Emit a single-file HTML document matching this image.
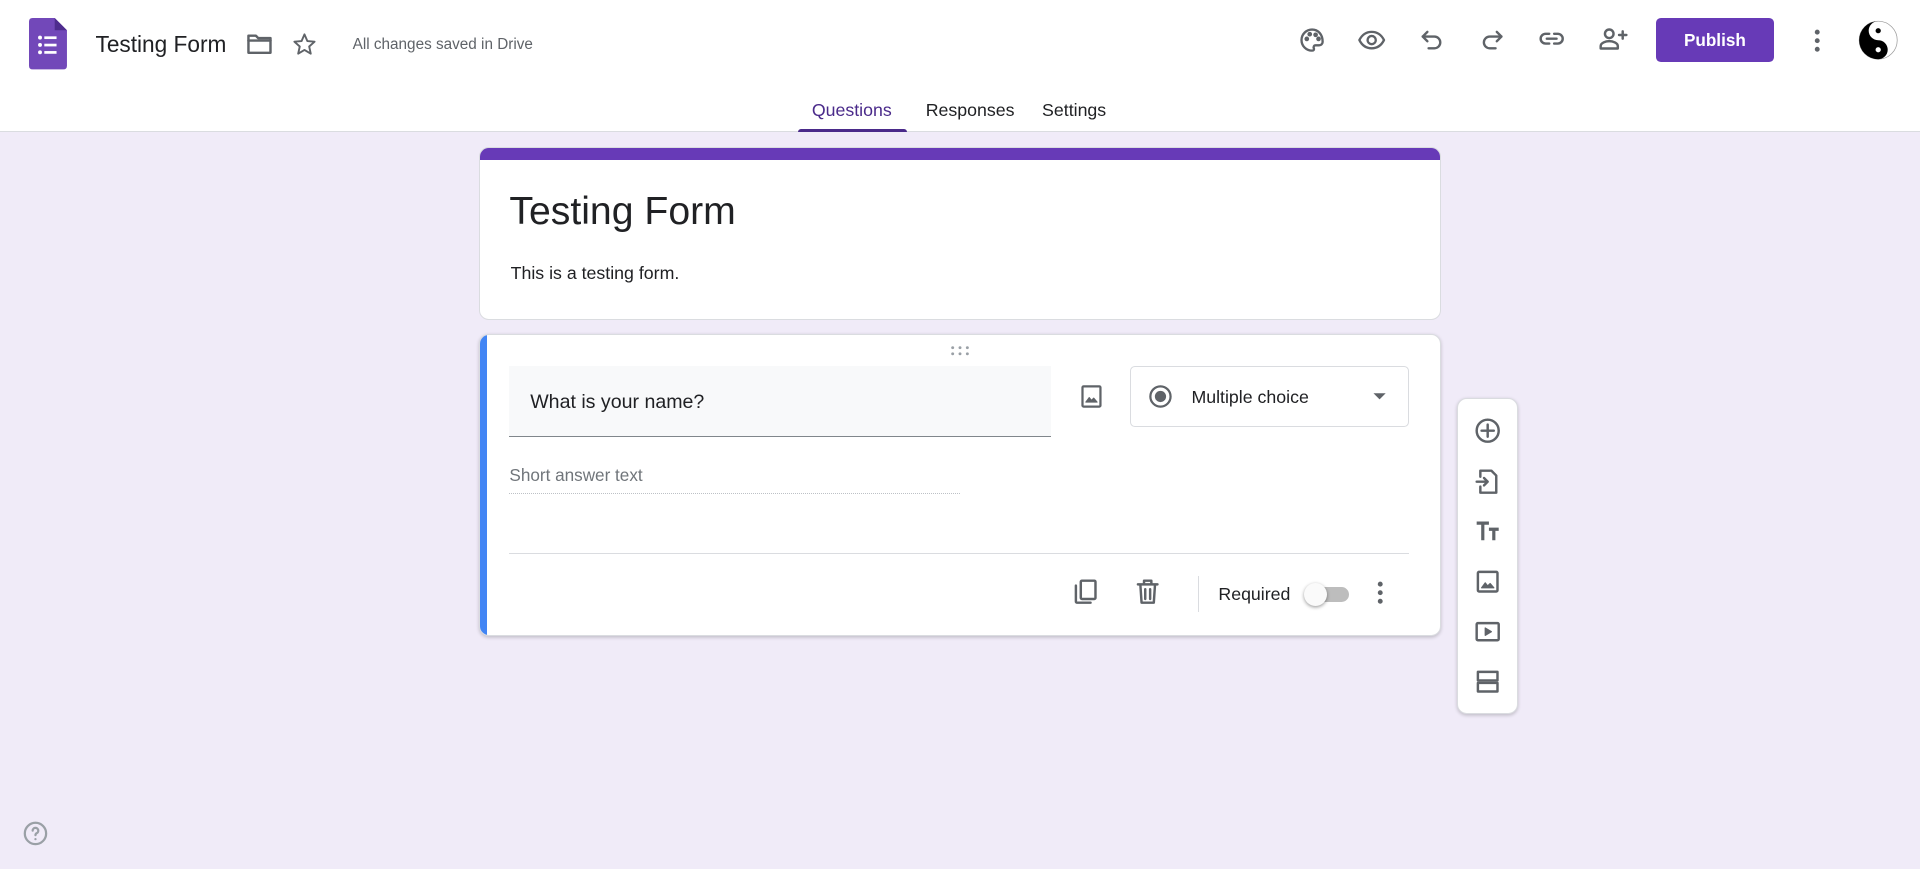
<!DOCTYPE html>
<html><head><meta charset="utf-8"><style>
html{zoom:1.2245}
*{box-sizing:border-box;margin:0;padding:0}
body{width:1568px;height:710px;overflow:hidden;background:#f0ebf8;font-family:"Liberation Sans",Roboto,sans-serif;color:#202124;position:relative}
.a{position:absolute}
svg{position:absolute;fill:none;stroke:#5f6368;stroke-width:2;stroke-linecap:round;stroke-linejoin:round}
.hdr{left:0;top:0;width:1568px;height:108px;background:#fff;border-bottom:1px solid #dadce0}
.tab{top:82px;font-size:14.5px;color:#202124}
.card{background:#fff;border:1px solid #dadce0;border-radius:8px}
</style></head><body>
<div class="a hdr"></div>
<svg style="left:24px;top:15px" width="31" height="42" viewBox="0 0 31 42"><path d="M3 0H21L31 10V39Q31 42 28 42H3Q0 42 0 39V3Q0 0 3 0Z" fill="#7248b9" stroke="none"/><path d="M21 0L31 10H21Z" fill="#4e2c8e" stroke="none"/><g fill="#fff" stroke="none"><circle cx="9" cy="16" r="1.6"/><circle cx="9" cy="22" r="1.6"/><circle cx="9" cy="28" r="1.6"/><rect x="12.5" y="15" width="10" height="2.2"/><rect x="12.5" y="21" width="10" height="2.2"/><rect x="12.5" y="27" width="10" height="2.2"/></g></svg>
<div class="a" style="left:78px;top:25px;font-size:18.5px">Testing Form</div>
<svg style="left:201px;top:26px" width="22" height="20" viewBox="0 0 22 20"><path d="M2 3H8L10 5H20V17H2Z"/><path d="M2 7H20"/></svg>
<svg style="left:238px;top:25px" width="22" height="22" viewBox="0 0 24 24"><path d="M12 3L14.6 9 21 9.5 16.2 13.8 17.6 20.2 12 16.9 6.4 20.2 7.8 13.8 3 9.5 9.4 9Z" stroke-width="1.7"/></svg>
<div class="a" style="left:288px;top:29px;font-size:12.5px;color:#5f6368">All changes saved in Drive</div>
<svg style="left:1060px;top:21px" width="23" height="23" viewBox="0 0 24 24"><path d="M12 3a9 9 0 1 0 0 18c1.5 0 2-1 1.5-2s0-2.5 1.5-2.5H18a3 3 0 0 0 3-3C21 7 17 3 12 3Z"/><circle cx="7.5" cy="11" r="1" fill="#5f6368"/><circle cx="10" cy="7" r="1" fill="#5f6368"/><circle cx="15" cy="7.5" r="1" fill="#5f6368"/><circle cx="17.5" cy="11" r="1" fill="#5f6368"/></svg>
<svg style="left:1108px;top:21px" width="24" height="23" viewBox="0 0 24 24"><path d="M1.5 12C4 7 8 5 12 5s8 2 10.5 7C20 17 16 19 12 19S4 17 1.5 12Z"/><circle cx="12" cy="12" r="3.5"/></svg>
<svg style="left:1158px;top:21px" width="23" height="23" viewBox="0 0 24 24"><path d="M8 5L4 9l4 4"/><path d="M4 9h10a5 5 0 0 1 0 10H9"/></svg>
<svg style="left:1207px;top:21px" width="23" height="23" viewBox="0 0 24 24"><path d="M16 5l4 4-4 4"/><path d="M20 9H10a5 5 0 0 0 0 10h5"/></svg>
<svg style="left:1255px;top:20px" width="24" height="24" viewBox="0 0 24 24"><path d="M10 8H7a4 4 0 0 0 0 8h3M14 8h3a4 4 0 0 1 0 8h-3M8 12h8"/></svg>
<svg style="left:1304px;top:20px" width="26" height="24" viewBox="0 0 26 24"><circle cx="10" cy="8" r="3.5"/><path d="M3 20v-2c0-2.5 4-4 7-4s7 1.5 7 4v2Z"/><path d="M21 6v6M18 9h6"/></svg>
<div class="a" style="left:1352px;top:15px;width:97px;height:36px;background:#673ab7;border-radius:4px;color:#fff;font-size:14px;font-weight:bold;text-align:center;line-height:36px">Publish</div>
<svg style="left:1474px;top:21px" width="20" height="24" viewBox="0 0 20 24"><g fill="#5f6368" stroke="none"><circle cx="10" cy="5" r="2"/><circle cx="10" cy="12" r="2"/><circle cx="10" cy="19" r="2"/></g></svg>
<svg style="left:1517px;top:16px" width="33" height="33" viewBox="0 0 34 34"><circle cx="17" cy="17" r="16" stroke="#999" stroke-width="0.6" fill="#fff"/><path d="M17 1a16 16 0 0 0 0 32a8 8 0 0 0 0-16a8 8 0 0 1 0-16Z" fill="#000" stroke="none"/><circle cx="17" cy="9" r="2.2" fill="#000" stroke="none"/><circle cx="17" cy="25" r="2.2" fill="#fff" stroke="none"/></svg>
<div class="a tab" style="left:663px;color:#4a2a8a">Questions</div>
<div class="a" style="left:652px;top:105px;width:89px;height:3px;background:#4a2a8a;border-radius:3px 3px 0 0"></div>
<div class="a tab" style="left:756px">Responses</div>
<div class="a tab" style="left:851px">Settings</div>
<div class="a card" style="left:391px;top:120px;width:786px;height:141px;overflow:hidden"><div style="height:10px;background:#673ab7"></div></div>
<div class="a" style="left:416px;top:155px;font-size:32px">Testing Form</div>
<div class="a" style="left:417px;top:215px;font-size:14.5px">This is a testing form.</div>
<div class="a card" style="left:391px;top:273px;width:786px;height:246px;overflow:hidden;box-shadow:0 1px 3px rgba(0,0,0,.2)"><div style="position:absolute;left:0;top:0;width:6px;height:100%;background:#4285f4"></div></div>
<svg style="left:775px;top:281px" width="18" height="10" viewBox="0 0 18 10"><g fill="#9aa0a6" stroke="none"><circle cx="3" cy="3" r="1.2"/><circle cx="9" cy="3" r="1.2"/><circle cx="15" cy="3" r="1.2"/><circle cx="3" cy="8" r="1.2"/><circle cx="9" cy="8" r="1.2"/><circle cx="15" cy="8" r="1.2"/></g></svg>
<div class="a" style="left:416px;top:299px;width:442px;height:58px;background:#f8f9fa;border-bottom:1px solid #80868b"></div>
<div class="a" style="left:433px;top:319px;font-size:16px">What is your name?</div>
<svg style="left:880px;top:313px" width="22" height="22" viewBox="0 0 24 24"><rect x="4" y="3" width="16" height="18" rx="1"/><path d="M7 17l3-4 2 2.5 2-2 3 3.5Z" fill="#5f6368" stroke-width="1"/></svg>
<div class="a" style="left:923px;top:299px;width:228px;height:50px;border:1px solid #dadce0;border-radius:4px"></div>
<svg style="left:937px;top:313px" width="22" height="22" viewBox="0 0 24 24"><circle cx="12" cy="12" r="9"/><circle cx="12" cy="12" r="5" fill="#5f6368" stroke="none"/></svg>
<div class="a" style="left:973px;top:316px;font-size:14.5px">Multiple choice</div>
<svg style="left:1120px;top:320px" width="14" height="8" viewBox="0 0 14 8"><path d="M2 1h10L7 6Z" fill="#5f6368" stroke="none"/></svg>
<div class="a" style="left:416px;top:380px;font-size:14px;color:#70757a">Short answer text</div>
<div class="a" style="left:416px;top:403px;width:368px;border-bottom:1px dotted #bdc1c6"></div>
<div class="a" style="left:416px;top:452px;width:735px;border-top:1px solid #dadce0"></div>
<svg style="left:875px;top:471px" width="24" height="24" viewBox="0 0 24 24"><rect x="8" y="3" width="12" height="15" rx="1"/><path d="M4 7v13a1 1 0 0 0 1 1h11"/></svg>
<svg style="left:925px;top:471px" width="24" height="24" viewBox="0 0 24 24"><path d="M4 6h16M9 6V3h6v3M6 6l1 15h10l1-15M10 10v8M14 10v8"/></svg>
<div class="a" style="left:978px;top:470px;height:30px;border-left:1px solid #dadce0"></div>
<div class="a" style="left:995px;top:477px;font-size:14.5px">Required</div>
<div class="a" style="left:1068px;top:479px;width:34px;height:13px;background:#bdbdbd;border-radius:7px"></div>
<div class="a" style="left:1065px;top:476px;width:19px;height:19px;background:#fafafa;border-radius:50%;box-shadow:0 1px 3px rgba(0,0,0,.4)"></div>
<svg style="left:1117px;top:472px" width="20" height="24" viewBox="0 0 20 24"><g fill="#5f6368" stroke="none"><circle cx="10" cy="5" r="2"/><circle cx="10" cy="12" r="2"/><circle cx="10" cy="19" r="2"/></g></svg>
<div class="a card" style="left:1190px;top:325px;width:50px;height:258px;box-shadow:0 1px 3px rgba(0,0,0,.2)"></div>
<svg style="left:1203px;top:340px" width="24" height="24" viewBox="0 0 24 24"><circle cx="12" cy="12" r="9"/><path d="M12 7v10M7 12h10"/></svg>
<svg style="left:1203px;top:381px" width="24" height="24" viewBox="0 0 24 24"><path d="M6 8V3h9l4 4v14H6v-5"/><path d="M3 12h9M9 9l3 3-3 3"/></svg>
<svg style="left:1203px;top:422px" width="24" height="24" viewBox="0 0 24 24"><path d="M3 5h10M8 5v14M13 10h8M17 10v9" stroke-width="2.6" stroke-linecap="butt"/></svg>
<svg style="left:1203px;top:463px" width="24" height="24" viewBox="0 0 24 24"><rect x="4" y="4" width="16" height="16" rx="1"/><path d="M7 17l3-4 2 2.5 2-2 3 3.5Z" fill="#5f6368" stroke-width="1"/></svg>
<svg style="left:1203px;top:504px" width="24" height="24" viewBox="0 0 24 24"><rect x="3" y="5" width="18" height="14" rx="1"/><path d="M10 9l5 3-5 3Z" fill="#5f6368" stroke-width="1"/></svg>
<svg style="left:1203px;top:545px" width="24" height="24" viewBox="0 0 24 24"><rect x="4" y="4" width="16" height="7"/><rect x="4" y="13" width="16" height="7"/></svg>
<svg style="left:18px;top:670px" width="22" height="22" viewBox="0 0 24 24"><circle cx="12" cy="12" r="9.5" stroke="#9aa0a6"/><path d="M9.5 9.5a2.5 2.5 0 1 1 3.5 2.3c-.7.4-1 .9-1 1.7" stroke="#9aa0a6"/><circle cx="12" cy="17" r="1" fill="#9aa0a6" stroke="none"/></svg>
</body></html>
